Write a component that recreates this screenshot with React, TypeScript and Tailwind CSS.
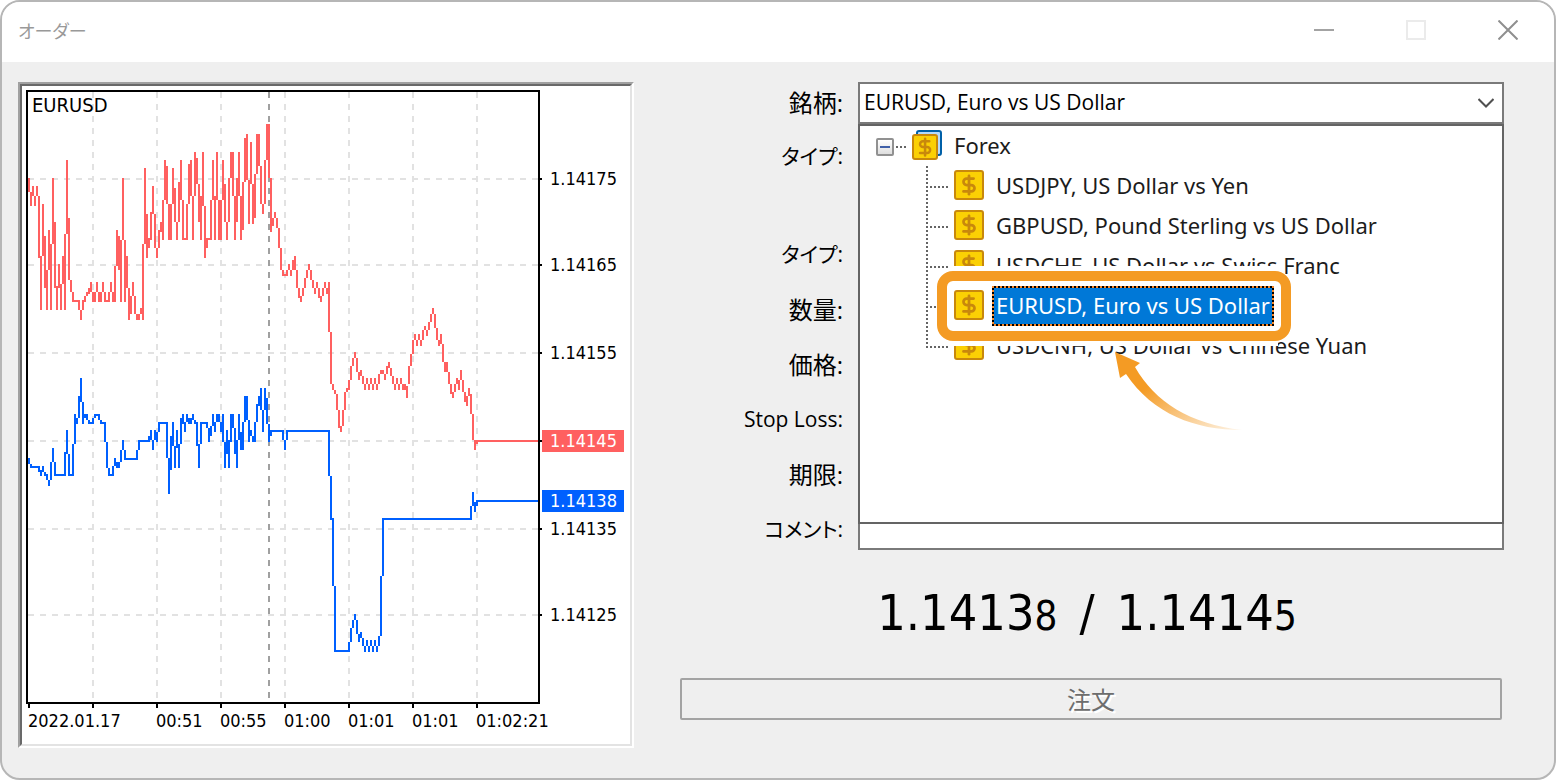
import { useId, useState } from "react";
import { DollarSign } from "lucide-react";

/**
 * One "low-high" span per pixel column of the plot, counted from the top edge.
 * "*n" repeats the span over n columns.
 */
const ASK = `
44-51 51-58 48-53 53-58 48-53 53-84 83-110 57-83 73-99 90-110 70-90 77-110 44-77 66-99 98-110
87-99 97-110 83-97 72-110 35-72 64-95 95-101 101-106 105-106*2 105-110 110-115 105-110 103-106
101-103 99-102 96-101 101-106*2 96-101 101-106*2 96-101 101-106 105-106 101-106 96-101 101-106
88-106 70-88 73-90 75-106 44-75 75-106 83-99 99-115 103-112 96-103 103-112 112-115*2 109-112
77-115 39-77 62-84 74-79 61-75 48-62 62-79 79-84 70-79 66-71 55-75 35-55 38-57 57-75*2 39-57
49-66 66-75 46-66 35-55 55-75 74-75 57-75 37-57 35-53 53-75 31-53 34-47 47-66 53-75 31-58 58-84
74-79 74-75 55-75 35-55 53-75 31-55 55-75*2 35-55 47-66 66-75 44-66 31-44 31-53 53-75 44-66
31-53 53-75 46-70 24-46 22-45 45-67 26-47 47-67 42-64 22-42 22-38 38-57 57-62 35-57 17-35 17-44
44-71 64-68 61-64 64-69 69-79 79-90 90-93 92-93 90-93 87-90 90-93 85-90 83-90 90-99 99-104
103-106 99-103 94-99 90-94 87-90 90-95 95-99 99-102 96-99 99-104 103-106 99-103 96-99 99-102
96-121 121-147 147-150 150-152 152-160 160-169 168-171 160-168 151-160 149-151 145-150 138-145
134-138 131-134 134-141 141-145 140-143 143-147 147-150 144-147 147-150 144-147 147-150 144-147
147-150 142-147 140-142*2 142-145 138-142 136-139 139-143 143-147 147-150 144-147 147-150
144-147 147-150 147-150 148-154 138-147 132-138 125-132 122-125 125-128 122-125 125-128 120-125
118-120 120-123 116-120 112-116 109-112 112-119 119-125 125-128 122-127 127-136 136-141*2
141-147 147-152 151-154 147-151 144-147 145-150 140-145 145-151 151-156 153-158 149-153 152-162
162-175 175-180 175-177 175-176*32`;

const BID = `
184-187 187-189 188-189*3 188-191 190-193 188-191 191-193 192-195 195-198 186-195 179-186
186-193 192-193*4 181-193 170-182 182-193 192-193 177-193 162-177 164-167 153-164 144-156
156-167 162-164 162-165 165-167 166-167 164-167 162-164 162-163 162-165 165-167 166-167
166-176 176-189 189-193 192-193 188-193 184-188 186-189*2 180-186 175-180 180-185 184-185*5
180-185 175-180 175-176*4 173-176 170-175 175-180 170-175 171-176 166-171 166-167*3 166-184
184-202 173-190 166-178 178-189 170-179 177-189 164-177 162-167 166-171 162-166 164-167*2
162-165 165-167 166-178 177-189 166-177 166-167*2 166-169 169-176 168-173 162-168 166-171
162-166*2 166-171 162-176 176-189 170-182 175-189 162-176 162-169 169-182 175-189 162-175
171-180 166-180 153-166 153-165 165-176 170-173 173-176 166-176 157-166 153-158 149-160 160-171
149-160 154-167 167-176 170-173 170-171*5 170-175 175-180 170-175 170-171*20 170-193 193-215
214-248 248-281 280-281*6 276-281 269-276 265-269 262-265 265-272 272-276 271-274 274-278
278-281 275-278 278-281 275-278 278-281 275-278 278-281 273-278 243-273 214-243 214-215*43
208-215 201-208 206-211 205-208 205-206*32`;

function seriesPath(data: string) {
  let x = 1;
  let d = "";
  for (const token of data.trim().split(/\s+/)) {
    const [span, times = "1"] = token.split("*");
    const [top, bottom] = span.split("-").map(Number);
    const width = Number(times);
    // never run over the right border of the plot
    const w = Math.min(width, 256 - x);
    if (w > 0) d += `M${x} ${top}h${w}V${bottom}h${-w}z`;
    x += width;
  }
  return d;
}

const GRID_X = [33, 65, 97, 129, 161, 193, 225];
const GRID_Y = [44, 87, 131, 175, 219, 262];

const PRICES = [
  { label: "1.14175", y: 99 },
  { label: "1.14165", y: 185 },
  { label: "1.14155", y: 273 },
  { label: "1.14135", y: 449 },
  { label: "1.14125", y: 535 },
];

const TIMES = [
  { label: "2022.01.17", x: 6 },
  { label: "00:51", x: 134 },
  { label: "00:55", x: 198 },
  { label: "01:00", x: 262 },
  { label: "01:01", x: 326 },
  { label: "01:01", x: 390 },
  { label: "01:02:21", x: 454 },
];

const SYMBOLS = [
  "USDJPY, US Dollar vs Yen",
  "GBPUSD, Pound Sterling vs US Dollar",
  "USDCHF, US Dollar vs Swiss Franc",
  "EURUSD, Euro vs US Dollar",
  "USDCNH, US Dollar vs Chinese Yuan",
];

function TickChart() {
  return (
    <svg
      viewBox="0 0 608 658"
      className="block h-[658px] w-[608px] bg-white font-['DejaVu_Sans_Condensed','DejaVu_Sans',sans-serif] text-[18px]"
      role="img"
      aria-label="EURUSD tick chart"
    >
      <g transform="translate(4 4) scale(2)" shapeRendering="crispEdges">
        <g stroke="#e2e2e2" strokeDasharray="3 3">
          {GRID_X.map((x) => (
            <path key={x} d={`M${x + 0.5} 1V306`} />
          ))}
          {GRID_Y.map((y) => (
            <path key={y} d={`M1 ${y + 0.5}H256`} />
          ))}
        </g>
        <path d="M121.5 1V306" stroke="#a0a0a0" strokeDasharray="3 3" />
        <path d={seriesPath(ASK)} fill="#ff6060" />
        <path d={seriesPath(BID)} fill="#0060ff" />
        <rect x="0.5" y="0.5" width="256" height="306" fill="none" stroke="#000" />
        {[1, ...GRID_X].map((x) => (
          <path key={x} d={`M${x + 0.5} 307v2`} stroke="#000" />
        ))}
        {GRID_Y.map((y) => (
          <path key={y} d={`M257 ${y + 0.5}h1`} stroke="#000" />
        ))}
      </g>

      <text x="10" y="26" className="text-[20px]">
        EURUSD
      </text>
      {PRICES.map((p) => (
        <text key={p.label} x="528" y={p.y}>
          {p.label}
        </text>
      ))}
      {TIMES.map((t) => (
        <text key={t.x} x={t.x} y="641">
          {t.label}
        </text>
      ))}

      {/* Current ask / bid */}
      <rect x="520" y="344" width="82" height="22" fill="#ff6060" />
      <text x="528" y="361" fill="#fff">
        1.14145
      </text>
      <rect x="520" y="404" width="82" height="22" fill="#0060ff" />
      <text x="528" y="421" fill="#fff">
        1.14138
      </text>
    </svg>
  );
}

function SymbolIcon() {
  return (
    <span className="mt-1 flex size-[30px] shrink-0 items-center justify-center rounded-[3px] border-2 border-[#c8880c] bg-[#fbd004] text-[#c8880c]">
      <DollarSign className="size-[22px]" strokeWidth={3} aria-hidden="true" />
    </span>
  );
}

function GroupIcon() {
  return (
    <svg viewBox="0 0 30 30" className="mt-1 ml-[18px] size-[30px] shrink-0" aria-hidden="true">
      <rect x="5" y="1" width="24" height="24" rx="2" fill="#b4dafc" stroke="#0060a8" strokeWidth="2" />
      <rect x="1" y="5" width="24" height="24" rx="2" fill="#fbd004" stroke="#c8880c" strokeWidth="2" />
      <g transform="translate(3 7) scale(0.84)" fill="none" stroke="#c8880c" strokeWidth="3" strokeLinecap="round">
        <path d="M12 2v20" />
        <path d="M17 5H9.500a3.500 3.500 0 0 0 0 7h5a3.500 3.500 0 0 1 0 7H6" />
      </g>
    </svg>
  );
}

function Callout() {
  return (
    <>
      <span className="absolute -inset-y-5 left-[90px] w-[328px] bg-white" />
      <span className="absolute -inset-y-[15px] left-[77px] w-[354px] rounded-2xl border-[10px] border-[#f49b24] bg-white" />
      <svg viewBox="0 0 128 80" className="absolute top-[66px] left-[255px] h-20 w-32" aria-hidden="true">
        <defs>
          <linearGradient id="tail" x1="0" y1="0" x2="1" y2="1">
            <stop offset="0.35" stopColor="#f49b24" />
            <stop offset="1" stopColor="#f49b24" stopOpacity="0.1" />
          </linearGradient>
        </defs>
        <path d="M0 0L25 11L20 15C40 50 75 72 127 78C80 78 38 62 11 22L5 26Z" fill="url(#tail)" />
      </svg>
    </>
  );
}

function SymbolTree({ selected, onSelect }: { selected: string; onSelect: (s: string) => void }) {
  return (
    <div className="absolute inset-x-0 top-full z-10 h-[400px] border-2 border-[#646464] bg-white font-['Noto_Sans','Open_Sans',sans-serif] text-[22px] text-[#1c1c1c]">
      <svg viewBox="0 0 90 240" className="absolute top-0 left-0 h-60 w-[90px]" shapeRendering="crispEdges" aria-hidden="true">
        <g stroke="#646464" strokeWidth="2" strokeDasharray="2 2">
          <path d="M36 21H48" />
          <path d="M67 40V222" />
          {[61, 101, 141, 181, 221].map((y) => (
            <path key={y} d={`M70 ${y}H88`} />
          ))}
        </g>
      </svg>
      <div className="flex h-10 items-start pl-4">
        <button
          type="button"
          aria-label="Collapse Forex"
          className="mt-3 flex size-[18px] items-center justify-center rounded-[2px] border-2 border-[#919191] bg-linear-to-b from-white to-[#dedede]"
        >
          <span className="h-[2px] w-[10px] bg-[#4060a8]" />
        </button>
        <GroupIcon />
        <span className="ml-3 leading-[38px]">Forex</span>
      </div>
      <ul>
        {SYMBOLS.map((s) => (
          <li key={s} className={s === selected ? "relative z-10" : "relative"}>
            {s === selected && <Callout />}
            <button
              type="button"
              onClick={() => onSelect(s)}
              className="relative flex h-10 items-start gap-2 pl-[94px] whitespace-nowrap"
            >
              <SymbolIcon />
              {s === selected ? (
                <span className="bg-[repeating-conic-gradient(#000_0_25%,#f98828_0_50%)] bg-size-[4px_4px] p-[2px]">
                  <span className="block h-9 bg-[#0078d7] px-[2px] leading-[34px] text-white">{s}</span>
                </span>
              ) : (
                <span className="pl-1 leading-[38px]">{s}</span>
              )}
            </button>
          </li>
        ))}
      </ul>
    </div>
  );
}

function Row({ label, className = "" }: { label: string; className?: string }) {
  const id = useId();
  return (
    <div className={`flex h-10 items-center gap-[15px] ${className}`}>
      <label htmlFor={id} className="w-[163px] shrink-0 text-right">
        {label}
      </label>
      <input id={id} className="h-10 min-w-0 flex-1 border-2 border-[#7a7a7a] bg-white px-1 text-[21px]" />
    </div>
  );
}

function Quote({ price, last }: { price: string; last: string }) {
  return (
    <span>
      {price}
      <span className="text-[40px]">{last}</span>
    </span>
  );
}

export default function App() {
  const [symbol, setSymbol] = useState(SYMBOLS[3]);

  return (
    <div className="bg-white">
      <main className="flex min-h-screen flex-col overflow-hidden rounded-[20px] border-2 border-[#b6b6b6] bg-[#efefef] font-['Open_Sans','Noto_Sans_CJK_JP',sans-serif] text-black">
        {/* Title bar */}
        <header className="flex h-[60px] items-start justify-between bg-white pl-4">
          <h1 className="font-['Noto_Sans_CJK_JP',sans-serif] text-[18px] leading-[56px] text-[#999] [font-feature-settings:'palt']">
            オーダー
          </h1>
          <div className="flex">
            <button type="button" aria-label="最小化" className="flex h-14 w-[92px] items-center justify-center">
              <span className="h-[2px] w-5 bg-[#a3a3a3]" />
            </button>
            <button type="button" aria-label="最大化" disabled className="flex h-14 w-[92px] items-center justify-center">
              <span className="size-5 border-2 border-[#ebebeb]" />
            </button>
            <button type="button" aria-label="閉じる" className="flex h-14 w-[92px] items-center justify-center">
              <svg viewBox="0 0 20 20" className="size-5" stroke="#8f8f8f" strokeWidth="2" aria-hidden="true">
                <path d="M0.500 0.500L19.500 19.500M19.500 0.500L0.500 19.500" />
              </svg>
            </button>
          </div>
        </header>

        <div className="flex flex-1 items-start gap-[46px] pt-5 pr-[50px] pb-[30px] pl-4">
          {/* Sunken frame around the chart */}
          <div className="shrink-0 border-2 border-t-[#a0a0a0] border-r-white border-b-white border-l-[#a0a0a0]">
            <div className="border-2 border-t-[#696969] border-r-[#e3e3e3] border-b-[#e3e3e3] border-l-[#696969]">
              <TickChart />
            </div>
          </div>

          <form className="min-w-0 flex-1" onSubmit={(e) => e.preventDefault()}>
            <div className="flex flex-col text-[21px] [font-feature-settings:'palt']">
              <div className="flex h-[42px] items-center gap-[15px]">
                <label htmlFor="symbol" className="w-[163px] shrink-0 text-right text-[24px]">
                  銘柄:
                </label>
                <div className="relative h-[42px] min-w-0 flex-1">
                  <select
                    id="symbol"
                    value={symbol}
                    onChange={(e) => setSymbol(e.target.value)}
                    className="h-[42px] w-full appearance-none border-2 border-[#7a7a7a] bg-white px-1"
                  >
                    {SYMBOLS.map((s) => (
                      <option key={s}>{s}</option>
                    ))}
                  </select>
                  <svg
                    viewBox="0 0 16 10"
                    className="pointer-events-none absolute top-4 right-[10px] h-[10px] w-4"
                    fill="none"
                    stroke="#505050"
                    strokeWidth="2"
                    aria-hidden="true"
                  >
                    <path d="M0.500 1L8 8.500L15.500 1" />
                  </svg>
                  <SymbolTree selected={symbol} onSelect={setSymbol} />
                </div>
              </div>
              <Row label="タイプ:" className="mt-[13px]" />
              <Row label="タイプ:" className="mt-[58px]" />
              <Row label="数量:" className="mt-[15px] text-[24px]" />
              <Row label="価格:" className="mt-[15px] text-[24px]" />
              <Row label="Stop Loss:" className="mt-[15px]" />
              <Row label="期限:" className="mt-[15px] text-[24px]" />
              <Row label="コメント:" className="mt-[15px]" />
            </div>

            <p className="mt-7 flex h-[70px] items-center justify-center gap-[22px] pr-[10px] font-['DejaVu_Sans_Condensed','DejaVu_Sans',sans-serif] text-[50px]">
              <Quote price="1.1413" last="8" />
              <span>/</span>
              <Quote price="1.1414" last="5" />
            </p>

            <div className="mt-[30px] pr-[2px]">
              <button
                type="submit"
                disabled
                className="block h-[42px] w-full rounded-[2px] border-2 border-[#a3a3a3] font-['Noto_Sans_CJK_JP',sans-serif] text-[24px] leading-none text-[#6d6d6d] [text-shadow:2px_2px_0_#fff]"
              >
                注文
              </button>
            </div>
          </form>
        </div>
      </main>
    </div>
  );
}
